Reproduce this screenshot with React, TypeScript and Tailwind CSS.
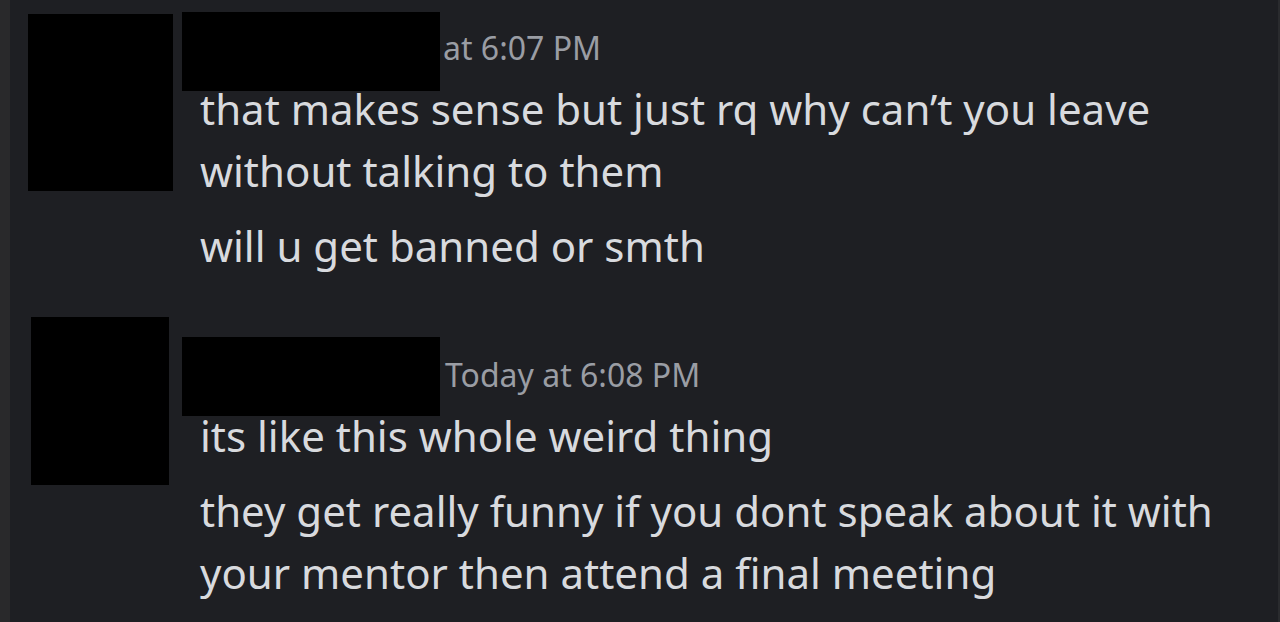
import React from 'react';

const font = { fontFamily: '"Noto Sans", "Open Sans", sans-serif' };

type Msg = { time: string; paras: string[][] };

const messages: Msg[] = [
  {
    time: 'at 6:07 PM',
    paras: [
      ['that makes sense but just rq why can’t you leave', 'without talking to them'],
      ['will u get banned or smth'],
    ],
  },
  {
    time: 'Today at 6:08 PM',
    paras: [
      ['its like this whole weird thing'],
      ['they get really funny if you dont speak about it with', 'your mentor then attend a final meeting'],
    ],
  },
];

export default function App() {
  return (
    <div className="w-[1280px] h-[622px] overflow-hidden flex bg-[#1e1f23]" style={font}>
      <div className="w-[10px] shrink-0 bg-[#29292b]" />
      <div className="flex-1 flex flex-col">
        <Message m={messages[0]} />
        <Message m={messages[1]} second />
      </div>
      <div className="w-[2px] shrink-0 bg-[#2a2b2e]" />
    </div>
  );
}

function Message({ m, second }: { m: Msg; second?: boolean }) {
  return (
    <div className={`flex ${second ? 'mt-[60px]' : 'mt-[12px]'}`}>
      {/* redacted avatar */}
      <div className={`bg-black shrink-0 ${second ? 'ml-[21px] mt-[-20px] w-[138px] h-[168px]' : 'ml-[18px] mt-[2px] w-[145px] h-[177px]'}`} />
      <div className={`flex flex-col ${second ? 'ml-[13px]' : 'ml-[9px]'}`}>
        <div className="flex items-end h-[79px]">
          {/* redacted name */}
          <div className="bg-black w-[258px] h-[79px] shrink-0" />
          <span className={`text-[32px] leading-none text-[#9a9da4] ${second ? 'ml-[5px] mb-[25px]' : 'ml-[3px] mb-[27px]'}`}>{m.time}</span>
        </div>
        <div className={`flex flex-col gap-[13px] ml-[18px] ${second ? 'mt-[-11px]' : 'mt-[-13px]'}`}>
          {m.paras.map((para, i) => (
            <div key={i} className="text-[42px] leading-[62px] text-[#d8dade] whitespace-nowrap">
              {para.map((l, j) => <div key={j}>{l}</div>)}
            </div>
          ))}
        </div>
      </div>
    </div>
  );
}
